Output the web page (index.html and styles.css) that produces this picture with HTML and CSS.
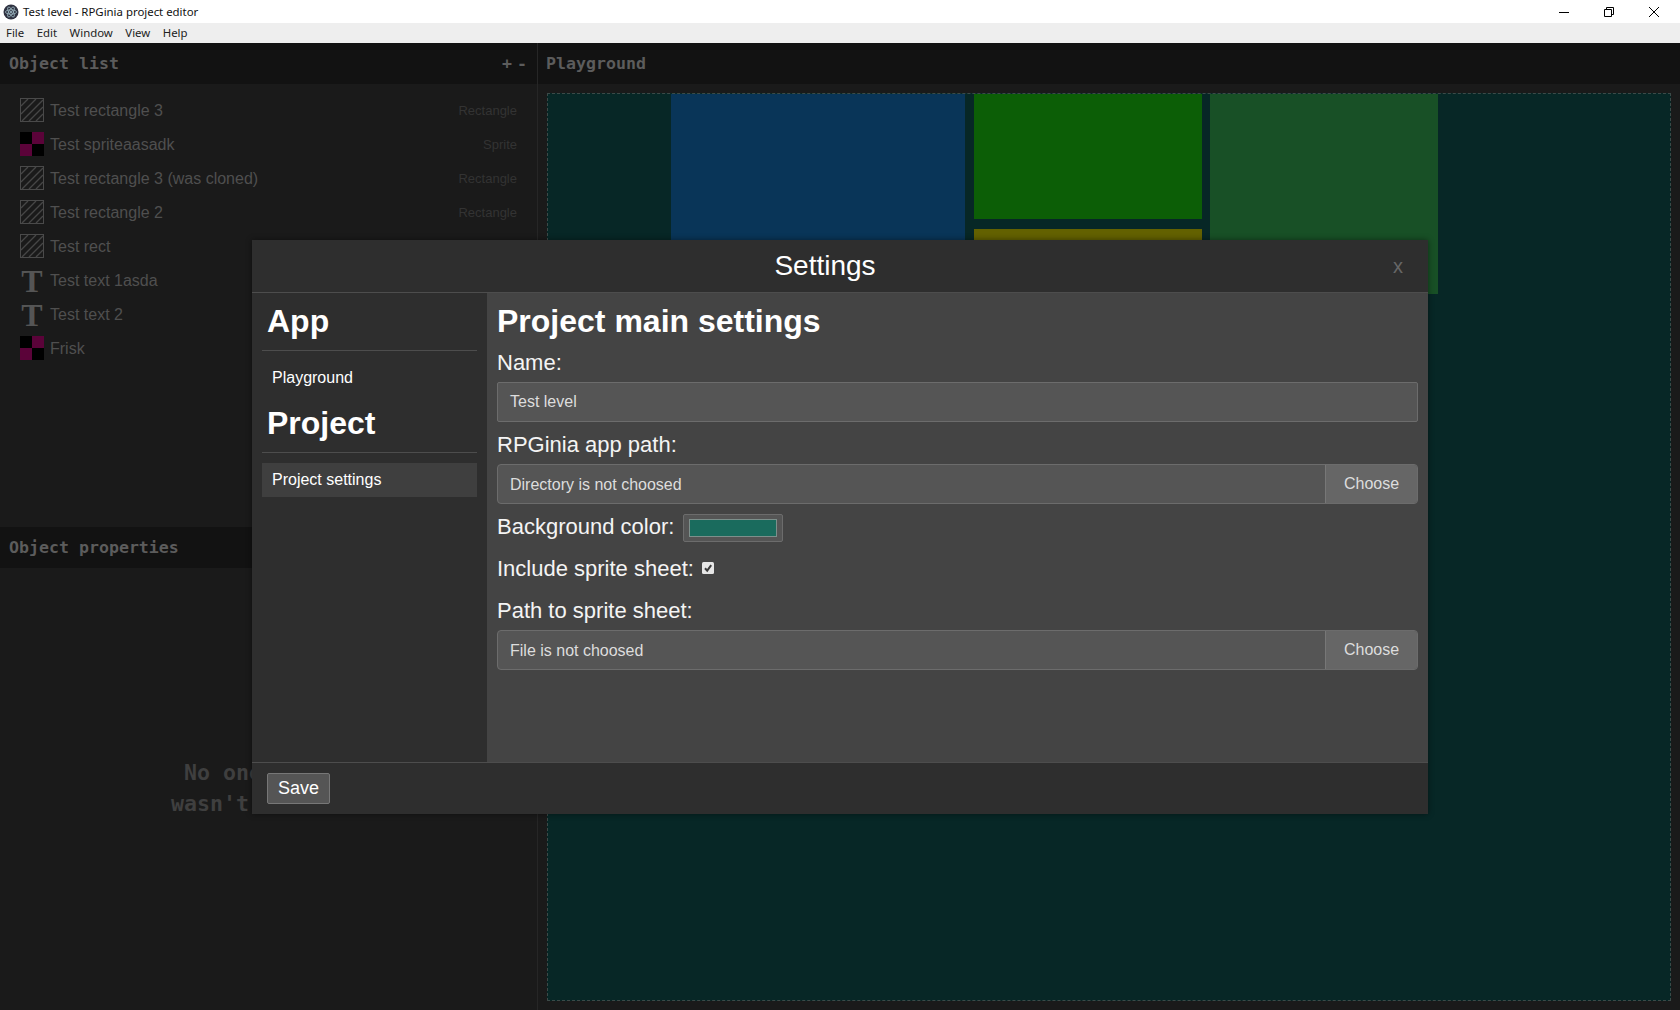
FILE: index.html
```html
<!DOCTYPE html>
<html lang="en">
<head>
<meta charset="utf-8">
<title>Test level - RPGinia project editor</title>
<link rel="stylesheet" href="styles.css">
</head>
<body>
<header class="titlebar">
  <svg class="app-icon" viewBox="0 0 16 16" width="16" height="16">
    <circle cx="8" cy="8" r="7.5" fill="#2f3241"/>
    <g fill="none" stroke="#a9c6d0" stroke-width=".7">
      <ellipse cx="8" cy="8" rx="5.6" ry="2.2"/>
      <ellipse cx="8" cy="8" rx="5.6" ry="2.2" transform="rotate(60 8 8)"/>
      <ellipse cx="8" cy="8" rx="5.6" ry="2.2" transform="rotate(120 8 8)"/>
    </g>
    <circle cx="8" cy="8" r="1" fill="#a9c6d0"/>
  </svg>
  <span class="title-text">Test level - RPGinia project editor</span>
  <div class="win-controls">
    <svg viewBox="0 0 10 10" width="10" height="10"><path d="M0 5.5h10" stroke="#000" fill="none"/></svg>
    <svg viewBox="0 0 10 10" width="10" height="10"><path d="M.5 2.5h7v7h-7zM2.5 2.5v-2h7v7h-2" stroke="#000" fill="none"/></svg>
    <svg viewBox="0 0 10 10" width="10" height="10"><path d="M0 0l10 10M10 0L0 10" stroke="#000" fill="none"/></svg>
  </div>
</header>
<nav class="menubar">
  <span>File</span><span>Edit</span><span>Window</span><span>View</span><span>Help</span>
</nav>
<main class="workspace">
  <aside class="left-panel">
    <section class="list-section">
      <div class="panel-head"><span>Object list</span><span class="head-actions"><span>+</span><span>-</span></span></div>
      <ul class="object-list">
        <li class="object-row"><svg class="ico"><use href="#hatch"/></svg><span class="obj-name">Test rectangle 3</span><span class="obj-type">Rectangle</span></li>
        <li class="object-row"><svg class="ico"><use href="#checker"/></svg><span class="obj-name">Test spriteaasadk</span><span class="obj-type">Sprite</span></li>
        <li class="object-row"><svg class="ico"><use href="#hatch"/></svg><span class="obj-name">Test rectangle 3 (was cloned)</span><span class="obj-type">Rectangle</span></li>
        <li class="object-row"><svg class="ico"><use href="#hatch"/></svg><span class="obj-name">Test rectangle 2</span><span class="obj-type">Rectangle</span></li>
        <li class="object-row"><svg class="ico"><use href="#hatch"/></svg><span class="obj-name">Test rect</span></li>
        <li class="object-row"><span class="ico-t">T</span><span class="obj-name">Test text 1asda</span></li>
        <li class="object-row"><span class="ico-t">T</span><span class="obj-name">Test text 2</span></li>
        <li class="object-row"><svg class="ico"><use href="#checker"/></svg><span class="obj-name">Frisk</span></li>
      </ul>
    </section>
    <section class="props-section">
      <div class="panel-head"><span>Object properties</span></div>
      <div class="empty-note">No one object<br>wasn't selected</div>
    </section>
  </aside>
  <section class="playground">
    <div class="panel-head panel-head-play"><span>Playground</span></div>
    <div class="canvas-wrap">
      <div class="canvas">
        <div class="shape shape-blue"></div>
        <div class="shape shape-green"></div>
        <div class="shape shape-yellow"></div>
        <div class="shape shape-forest"></div>
      </div>
    </div>
  </section>
</main>

<div class="modal">
  <div class="modal-head">
    <span class="modal-title">Settings</span>
    <span class="modal-close">x</span>
  </div>
  <div class="modal-body">
    <div class="modal-side">
      <h2 class="side-title">App</h2>
      <div class="side-item">Playground</div>
      <h2 class="side-title">Project</h2>
      <div class="side-item side-item-active">Project settings</div>
    </div>
    <div class="modal-content">
      <h2 class="content-title">Project main settings</h2>
      <div class="label label-first">Name:</div>
      <div class="field"><span class="field-text">Test level</span></div>
      <div class="label">RPGinia app path:</div>
      <div class="field field-round"><span class="field-text">Directory is not choosed</span><span class="field-btn">Choose</span></div>
      <div class="row row-color">
        <span class="label-inline label-raised">Background color:</span>
        <span class="swatch"><span class="swatch-fill"></span></span>
      </div>
      <div class="row row-check">
        <span class="label-inline">Include sprite sheet:</span>
        <svg class="check" viewBox="0 0 12 12" width="12" height="12"><rect width="12" height="12" rx="1.5" fill="#e6e6e6"/><path d="M3 6.2l2.2 2.4L9.2 3.2" fill="none" stroke="#3a3a3a" stroke-width="2"/></svg>
      </div>
      <div class="label label-path">Path to sprite sheet:</div>
      <div class="field field-round"><span class="field-text">File is not choosed</span><span class="field-btn">Choose</span></div>
    </div>
  </div>
  <div class="modal-foot"><span class="save-btn">Save</span></div>
</div>

<svg class="defs" width="0" height="0">
  <defs>
    <symbol id="hatch" viewBox="0 0 24 24">
      <rect x=".5" y=".5" width="23" height="23" fill="none" stroke="#4a4a4a"/>
      <path d="M1 8L8 1M1 16L16 1M2 23L23 2M9 23L23 9M16 23L23 16" fill="none" stroke="#464646" stroke-width="1.4"/>
    </symbol>
    <symbol id="checker" viewBox="0 0 24 24">
      <rect width="24" height="24" fill="#000"/>
      <rect x="12" width="12" height="12" fill="#5b0339"/>
      <rect y="12" width="12" height="12" fill="#5b0339"/>
    </symbol>
  </defs>
</svg>
</body>
</html>
```
FILE: styles.css
```css
* { box-sizing: border-box; }
html, body { margin: 0; height: 100%; }
body {
  position: relative;
  display: flex;
  flex-direction: column;
  height: 1010px;
  overflow: hidden;
  background: #1a1a1a;
  font-family: "Liberation Sans", Arial, sans-serif;
}
.defs { position: absolute; }

.titlebar {
  height: 23px;
  flex: none;
  display: flex;
  align-items: center;
  padding-left: 3px;
  background: #fff;
  color: #111;
  font: 11.4px/23px "Noto Sans", "Open Sans", sans-serif;
}
.app-icon { flex: none; margin-right: 4px; }
.win-controls {
  margin-left: auto;
  display: flex;
  gap: 35px;
  padding-right: 21px;
}
.menubar {
  height: 20px;
  flex: none;
  display: flex;
  gap: 12.5px;
  padding-left: 6px;
  background: #eee;
  color: #222;
  font: 11.4px/20px "Noto Sans", "Open Sans", sans-serif;
}

.workspace { flex: 1; display: flex; min-height: 0; }
.left-panel {
  width: 538px;
  flex: none;
  display: flex;
  flex-direction: column;
  border-right: 1px solid #262626;
}
.panel-head {
  height: 41px;
  flex: none;
  display: flex;
  justify-content: space-between;
  align-items: center;
  padding: 0 9px;
  background: #121212;
  color: #5c5c5c;
  font: bold 16.6px/41px "DejaVu Sans Mono", monospace;
}
.panel-head-play { padding-left: 8px; }
.head-actions { display: flex; gap: 5px; padding-right: 1px; }
.list-section { height: 484px; flex: none; }
.object-list { list-style: none; margin: 0; padding: 9px 20px 0; }
.object-row {
  height: 34px;
  display: flex;
  align-items: center;
  padding-top: 1px;
  color: #4f4f4f;
  font-size: 16px;
}
.ico { width: 24px; height: 24px; flex: none; margin: -1px 6px 0 0; }
.ico-t {
  width: 24px;
  flex: none;
  margin-right: 6px;
  text-align: center;
  color: #555;
  font: bold 32px/34px "Liberation Serif", serif;
}
.obj-name { flex: 1; }
.obj-type { color: #333; font-size: 13px; }

.props-section { flex: 1; display: flex; flex-direction: column; }
.empty-note {
  padding-top: 189px;
  text-align: center;
  color: #3f3f3f;
  font: bold 21.6px/31px "DejaVu Sans Mono", monospace;
}

.playground { flex: 1; display: flex; flex-direction: column; min-width: 0; }
.canvas-wrap { flex: 1; padding: 9px; }
.canvas {
  position: relative;
  height: 100%;
  overflow: hidden;
  background: #072726;
  border: 1px dashed #3c4a48;
}
.shape { position: absolute; }
.shape-blue { left: 123px; top: 0; width: 294px; height: 400px; background: #093558; }
.shape-green { left: 426px; top: 0; width: 228px; height: 125px; background: #0c5e06; }
.shape-yellow { left: 426px; top: 135px; width: 228px; height: 100px; background: #636100; }
.shape-forest { left: 662px; top: 0; width: 228px; height: 200px; background: #185026; }

.modal {
  position: absolute;
  left: 252px;
  top: 240px;
  width: 1176px;
  height: 574px;
  display: flex;
  flex-direction: column;
  background: #2e2e2e;
  box-shadow: 0 0 6px rgba(0, 0, 0, .45);
  color: #fff;
}
.modal-head {
  position: relative;
  height: 53px;
  flex: none;
  padding-right: 30px;
  border-bottom: 1px solid #4d4d4d;
  text-align: center;
}
.modal-title { font-size: 28px; line-height: 52px; }
.modal-close {
  position: absolute;
  right: 25px;
  top: 13px;
  color: #666;
  font-size: 20px;
  line-height: 26px;
}
.modal-body { flex: 1; display: flex; min-height: 0; }
.modal-side { width: 235px; flex: none; padding: 0 10px; }
.side-title {
  margin: 10px 0;
  padding: 0 5px 10px;
  border-bottom: 1px solid #4d4d4d;
  font-size: 32px;
  line-height: 37px;
  font-weight: bold;
}
.side-item {
  height: 34px;
  padding-left: 10px;
  font-size: 16px;
  line-height: 34px;
}
.side-item-active { background: #3f3f3f; }
.modal-content { flex: 1; padding: 10px 10px 0; background: #444; }
.content-title { margin: 0; font-size: 32px; line-height: 37px; font-weight: bold; }
.label { margin: 10px 0 7px; font-size: 22px; line-height: 25px; color: #f4f4f4; }
.label-first { margin-top: 10px; }
.label-path { margin-top: 17px; }
.label-inline { font-size: 22px; line-height: 25px; color: #f4f4f4; }
.label-raised { margin-top: -4px; }
.field {
  height: 40px;
  display: flex;
  align-items: stretch;
  background: #555;
  border: 1px solid #6c6c6c;
  border-radius: 2px;
  color: #ddd;
  font-size: 16px;
  line-height: 38px;
}
.field-round { border-radius: 4px; line-height: 39px; }
.field-text { flex: 1; padding-left: 12px; }
.field-btn {
  width: 92px;
  flex: none;
  text-align: center;
  background: #666;
  border-left: 1px solid #777;
  border-radius: 0 3px 3px 0;
  line-height: 37px;
}
.row { display: flex; align-items: center; }
.row-color { height: 28px; margin-top: 10px; gap: 9px; }
.row-check { height: 25px; margin-top: 14px; gap: 8px; }
.swatch {
  width: 100px;
  height: 28px;
  display: block;
  padding: 4px 5px;
  background: #555;
  border: 1px solid #6c6c6c;
  border-radius: 2px;
}
.swatch-fill {
  display: block;
  height: 100%;
  background: #1a6b5d;
  border: 1px solid #7d8f8b;
}
.check { flex: none; margin-top: -2px; }
.modal-foot {
  height: 52px;
  flex: none;
  padding: 10px 15px;
  border-top: 1px solid #4d4d4d;
}
.save-btn {
  display: block;
  width: 63px;
  height: 31px;
  text-align: center;
  background: #555;
  border: 1px solid #777;
  border-radius: 2px;
  font-size: 18px;
  line-height: 28px;
}
```
